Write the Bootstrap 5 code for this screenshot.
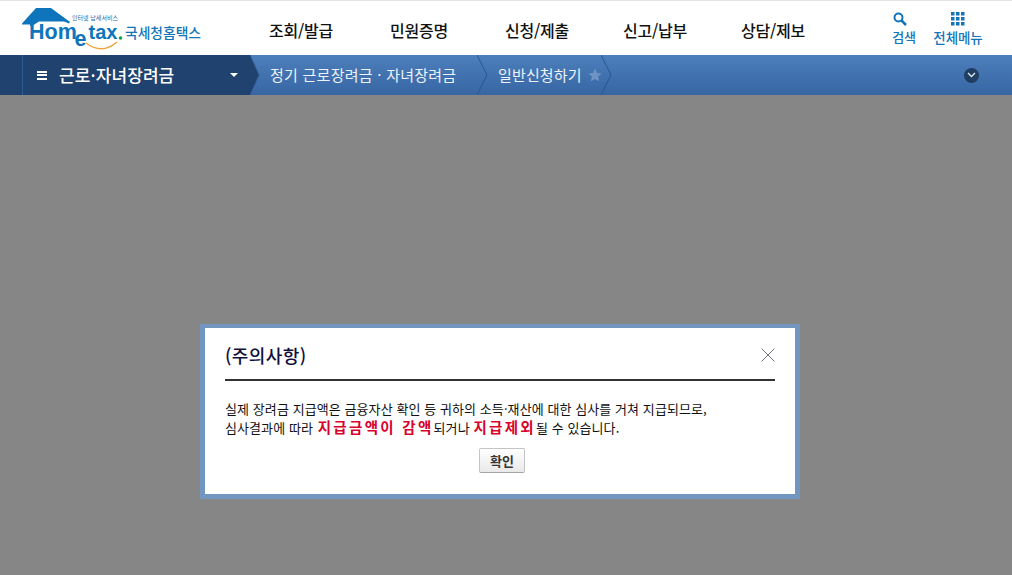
<!DOCTYPE html>
<html lang="ko"><head><meta charset="utf-8">
<link rel="stylesheet" href="https://cdn.jsdelivr.net/npm/bootstrap@5.3.0/dist/css/bootstrap.min.css">
<style>
html,body{height:575px;overflow:hidden}
body{font-family:"Noto Sans CJK KR","Liberation Sans",sans-serif;background:#868686;color:#111}
.top-head{height:55px;background:#fff;border-top:1px solid #e2e2e2}
.logo-box{width:242px;padding-left:22px;flex:none}
.logo-svg{display:block}
.main-nav{padding-top:3px;font-size:16px;font-weight:500;color:#111}
.main-nav span{width:118px;text-align:center;white-space:nowrap;letter-spacing:-.2px}
.tool-box{font-size:13px;font-weight:500;color:#1275b8;line-height:14px;letter-spacing:-.1px;margin-right:27px}
.tool-item{width:54px}
.tool-search{margin-right:8px}
.tool-all{font-size:13.5px}
.crumb-bar{height:40px;background:linear-gradient(#4c7fbb,#3766a3);color:#fff}
.edge-left{width:22px;background:#20426f;flex:none}
.crumb-first{width:228px;background:#20426f;border-left:1px solid #2f5a90;padding-left:14px;font-size:17px;font-weight:500;letter-spacing:.1px;flex:none}
.crumb-tip{width:12px;flex:none}
.crumb-text{font-size:15px;font-weight:400;color:#eef3f9;letter-spacing:.25px;white-space:nowrap;flex:none}
.crumb-one{width:215px;padding-left:8px}
.crumb-two{width:112px;padding-left:9px;letter-spacing:.15px}
.star-icon{margin-left:6px;flex:none}
.caret-down{border:4px solid transparent;border-top-color:#fff;border-bottom:0;margin-left:auto;margin-right:12px}
.burger{width:10px;height:9px;border-top:2px solid #fff;border-bottom:2px solid #fff;position:relative;margin-right:12px}
.burger::after{content:"";position:absolute;left:0;right:0;top:1.500px;height:2px;background:#fff}
.round-btn{width:15px;height:15px;border-radius:50%;background:#203d62;margin-left:auto;margin-right:33px}
.shade{padding-top:229px}
.dlg{width:600px;height:175px;margin-left:200px;background:#fff;border:solid #7396c1;border-width:4px 5px 5px;padding:0 20px;position:relative}
.dlg-head{height:53px;border-bottom:2px solid #333;font-size:18px;font-weight:500;color:#10103c;padding-top:15px;line-height:24px;letter-spacing:.4px}
.dlg-x{position:absolute;right:20px;top:20px;display:block}
.dlg-body{font-size:13px;line-height:19px;margin-top:18px;color:#111;letter-spacing:.08px;white-space:nowrap}
.hot{color:#d9002c;font-size:14.500px;font-weight:700;letter-spacing:2.300px;line-height:1}
.hot-first{margin-left:1px}
.ok-btn{width:46px;height:25px;margin:11px 0 0 254px;display:flex;align-items:center;justify-content:center;font-size:13px;font-weight:700;color:#333;background:linear-gradient(#fff,#e9e9e9);border:1px solid #c4c4c4;border-bottom-color:#a5a5a5;border-radius:2px;padding:0}
</style></head>
<body>
<header class="top-head d-flex align-items-center">
  <div class="logo-box">
    <svg class="logo-svg" width="190" height="46" viewBox="0 0 190 46">
      <path d="M0 18.500 L14 3 L29 3 L48 17 L47 18.500 L42 16.500 L17 16.500 L10 21 L8 21 L8 19.500 L0 19.500 Z" fill="#0e75bd"/>
      <text x="50" y="15" font-size="6" fill="#1b6bb0" font-family="Noto Sans CJK KR" textLength="46">인터넷 납세서비스</text>
      <text x="7" y="34" font-size="21.500" font-weight="700" fill="#0e75bd" font-family="Liberation Sans">Hom<tspan x="52.500" dy="7">e</tspan><tspan x="66.500" dy="-7" font-size="20">tax</tspan></text>
      <circle cx="98.500" cy="33" r="1.800" fill="#11a04f"/>
      <path d="M64 38 Q80 50 95 37" fill="none" stroke="#f1a33b" stroke-width="1.300"/>
      <text x="103" y="33" font-size="14" font-weight="500" fill="#1275b8" font-family="Noto Sans CJK KR" textLength="76" lengthAdjust="spacingAndGlyphs">국세청홈택스</text>
    </svg>
  </div>
  <nav class="main-nav d-flex"><span>조회/발급</span><span>민원증명</span><span>신청/제출</span><span>신고/납부</span><span>상담/제보</span></nav>
  <div class="tool-box d-flex ms-auto text-center">
    <div class="tool-item d-flex flex-column align-items-center gap-1">
      <svg class="tool-search" width="14" height="14" viewBox="0 0 14 14"><circle cx="5.500" cy="5.500" r="4" fill="none" stroke="#1275b8" stroke-width="2"/><path d="M8.500 8.500L13 13" stroke="#1275b8" stroke-width="2.500"/></svg>
      <span>검색</span>
    </div>
    <div class="tool-item tool-all d-flex flex-column align-items-center gap-1">
      <svg width="14" height="14" viewBox="0 0 14 14" fill="#1275b8"><rect width="3.500" height="3.500"/><rect x="5" width="3.500" height="3.500"/><rect x="10" width="3.500" height="3.500"/><rect y="5" width="3.500" height="3.500"/><rect x="5" y="5" width="3.500" height="3.500"/><rect x="10" y="5" width="3.500" height="3.500"/><rect y="10" width="3.500" height="3.500"/><rect x="5" y="10" width="3.500" height="3.500"/><rect x="10" y="10" width="3.500" height="3.500"/></svg>
      <span class="text-nowrap">전체메뉴</span>
    </div>
  </div>
</header>
<div class="crumb-bar d-flex align-items-stretch">
  <div class="edge-left"></div>
  <div class="crumb-first d-flex align-items-center">
    <span class="burger"></span><span>근로·자녀장려금</span><span class="caret-down"></span>
  </div>
  <svg class="crumb-tip" width="12" height="40" viewBox="0 0 12 40"><path d="M0 0 L9 20 L0 40Z" fill="#20426f"/><path d="M0 0 L9 20 L0 40" fill="none" stroke="#2f5a90"/></svg>
  <div class="crumb-one crumb-text d-flex align-items-center">정기 근로장려금 · 자녀장려금</div>
  <svg class="crumb-tip" width="12" height="40" viewBox="0 0 12 40"><path d="M0 0 L10 20 L0 40" fill="none" stroke="#2a568f"/></svg>
  <div class="crumb-two crumb-text d-flex align-items-center">일반신청하기<svg class="star-icon" width="14" height="14" viewBox="0 0 24 24"><path d="M12 1l3.400 7.400 8 .9-6 5.400 1.700 8L12 18.700 4.900 22.700l1.700-8-6-5.400 8-.9z" fill="#6f94c4"/></svg></div>
  <svg class="crumb-tip" width="12" height="40" viewBox="0 0 12 40"><path d="M0 0 L10 20 L0 40" fill="none" stroke="#2a568f"/></svg>
  <div class="round-btn align-self-center d-flex align-items-center justify-content-center">
    <svg width="9" height="6" viewBox="0 0 9 6"><path d="M1 1l3.500 3.500L8 1" fill="none" stroke="#dfe6ef" stroke-width="1.400"/></svg>
  </div>
</div>
<main class="shade">
  <section class="dlg">
    <div class="dlg-head">(주의사항)</div>
    <svg class="dlg-x" width="14" height="14" viewBox="0 0 14 14"><path d="M.5.5l13 13M13.500.5l-13 13" stroke="#4a4a66" stroke-width=".8" fill="none"/></svg>
    <div class="dlg-body">실제 장려금 지급액은 금융자산 확인 등 귀하의 소득·재산에 대한 심사를 거쳐 지급되므로,<br>심사결과에 따라 <span class="hot hot-first">지급금액이 감액</span>되거나 <span class="hot">지급제외</span>될 수 있습니다.</div>
    <button type="button" class="ok-btn btn">확인</button>
  </section>
</main>
<script src="https://cdn.jsdelivr.net/npm/bootstrap@5.3.0/dist/js/bootstrap.bundle.min.js"></script>
</body></html>
